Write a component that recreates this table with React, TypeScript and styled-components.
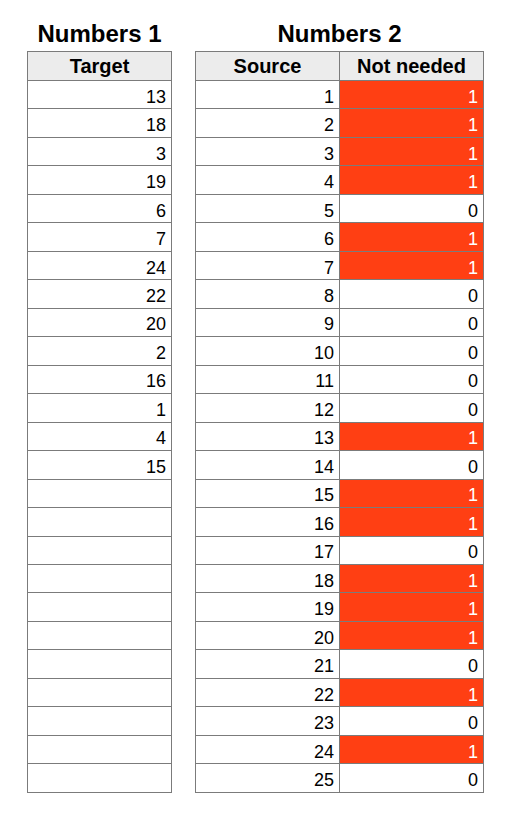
import React from 'react';
import styled, { createGlobalStyle } from 'styled-components';

const GlobalStyle = createGlobalStyle`
  body {
    margin: 0;
    background: #ffffff;
    font-family: "Liberation Sans", Arial, Helvetica, sans-serif;
    color: #000;
  }
`;

const Page = styled.div`
  display: flex;
  align-items: flex-start;
  gap: 23px;
  padding: 20px 0 0 27px;
`;

const Block = styled.section`
  display: flex;
  flex-direction: column;
  align-items: stretch;
`;

const Title = styled.h2`
  margin: 0 0 3px;
  font-size: 24px;
  line-height: 28px;
  font-weight: bold;
  text-align: center;
`;

const Grid = styled.div<{ $cols: number }>`
  display: grid;
  grid-template-columns: repeat(${p => p.$cols}, 143px);
  grid-template-rows: 28px;
  grid-auto-rows: 27.48px;
  gap: 1px;
  background: #7b7b7b;
  border: 1px solid #7b7b7b;
`;

const HeadCell = styled.div`
  background: #ececec;
  font-size: 20px;
  font-weight: bold;
  display: flex;
  align-items: center;
  justify-content: center;
`;

const Cell = styled.div<{ $hit?: boolean }>`
  background: ${p => (p.$hit ? '#ff3f13' : '#ffffff')};
  color: ${p => (p.$hit ? '#ffffff' : '#000000')};
  font-size: 18px;
  display: flex;
  align-items: center;
  justify-content: flex-end;
  padding: 5px 5px 0 0;
`;

const targets = [13, 18, 3, 19, 6, 7, 24, 22, 20, 2, 16, 1, 4, 15];
const ROWS = 25;

const App = () => {
  const rows1 = Array.from({ length: ROWS }, (_, i) => targets[i]);
  const sources = Array.from({ length: ROWS }, (_, i) => i + 1);

  return (
    <>
      <GlobalStyle />
      <Page>
        <Block>
          <Title>Numbers 1</Title>
          <Grid $cols={1}>
            <HeadCell>Target</HeadCell>
            {rows1.map((n, i) => (
              <Cell key={i}>{n ?? ''}</Cell>
            ))}
          </Grid>
        </Block>
        <Block>
          <Title>Numbers 2</Title>
          <Grid $cols={2}>
            <HeadCell>Source</HeadCell>
            <HeadCell>Not needed</HeadCell>
            {sources.map(s => {
              const hit = targets.includes(s);
              return (
                <React.Fragment key={s}>
                  <Cell>{s}</Cell>
                  <Cell $hit={hit}>{hit ? 1 : 0}</Cell>
                </React.Fragment>
              );
            })}
          </Grid>
        </Block>
      </Page>
    </>
  );
};

export default App;
